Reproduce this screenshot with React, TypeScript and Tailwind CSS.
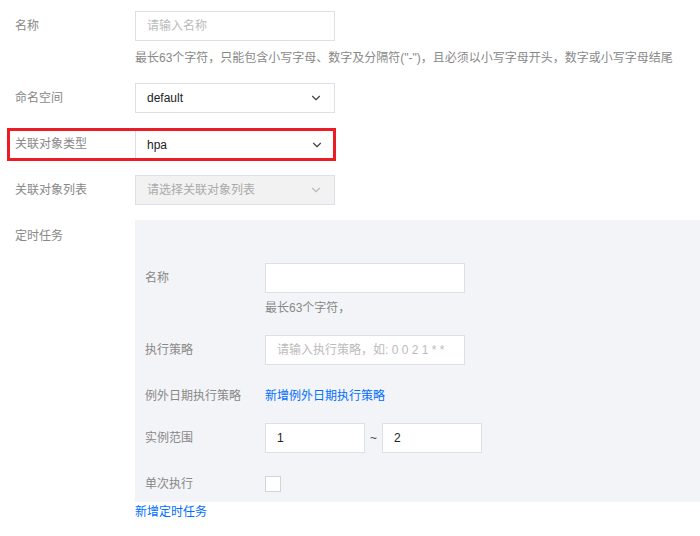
import { ChevronDown } from 'lucide-react';

const FONT = { fontFamily: '"Liberation Sans", "Noto Sans CJK SC", sans-serif' };

function Label({ children, width = 'w-[120px]' }: { children: React.ReactNode; width?: string }) {
  return <div className={`${width} shrink-0 text-[12px] leading-[30px] text-[#888]`}>{children}</div>;
}

function Select({ value, disabled }: { value: string; disabled?: boolean }) {
  return (
    <div
      className={`w-[200px] h-[30px] flex items-center justify-between pl-[11px] pr-[11px] border border-[#dcdfe6] text-[12px] ${
        disabled ? 'bg-[#f2f2f2] text-[#aaa]' : 'bg-white text-[#222]'
      }`}
    >
      <span>{value}</span>
      <ChevronDown className={`w-[14px] h-[14px] ${disabled ? 'text-[#bbb]' : 'text-[#444]'}`} strokeWidth={2} />
    </div>
  );
}

function Input({ placeholder, value, width = 'w-[200px]' }: { placeholder?: string; value?: string; width?: string }) {
  return (
    <div className={`${width} h-[30px] flex items-center px-[11px] bg-white border border-[#dcdfe6] text-[12px]`}>
      {value ? <span className="text-[#222]">{value}</span> : <span className="text-[#bbb]">{placeholder}</span>}
    </div>
  );
}

export default function App() {
  return (
    <div className="w-[700px] h-[536px] bg-white overflow-hidden pt-[11px]" style={FONT}>
      {/* 名称 */}
      <div className="flex pl-[15px]">
        <Label>名称</Label>
        <Input placeholder="请输入名称" />
      </div>
      <div className="ml-[135px] mt-[8px] text-[12px] leading-[18px] text-[#888]">
        最长63个字符，只能包含小写字母、数字及分隔符("-")，且必须以小写字母开头，数字或小写字母结尾
      </div>

      {/* 命名空间 */}
      <div className="flex pl-[15px] mt-[16px]">
        <Label>命名空间</Label>
        <Select value="default" />
      </div>

      {/* 关联对象类型 (highlighted) */}
      <div className="ml-[7px] mt-[15px] w-[329px] h-[33px] border-[3px] border-[#ec1c24] flex">
        <div className="w-[125px] pl-[5px] shrink-0 text-[12px] leading-[27px] text-[#888]">关联对象类型</div>
        <div className="w-[198px] h-full flex items-center justify-between pl-[11px] pr-[9px] border-l border-[#dcdfe6] text-[12px] text-[#222]">
          <span>hpa</span>
          <ChevronDown className="w-[14px] h-[14px] text-[#444]" strokeWidth={2} />
        </div>
      </div>

      {/* 关联对象列表 */}
      <div className="flex pl-[15px] mt-[14px]">
        <Label>关联对象列表</Label>
        <Select value="请选择关联对象列表" disabled />
      </div>

      {/* 定时任务 */}
      <div className="flex pl-[15px] mt-[15px]">
        <div className="w-[120px] shrink-0 pt-[7px] text-[12px] leading-[18px] text-[#888]">定时任务</div>
        <div className="flex-1">
          <div className="bg-[#f3f4f7] h-[282px] pl-[10px] pt-[43px]">
            <div className="flex">
              <Label>名称</Label>
              <Input />
            </div>
            <div className="ml-[120px] mt-[7px] text-[12px] leading-[16px] text-[#888]">最长63个字符，</div>
            <div className="flex mt-[19px]">
              <Label>执行策略</Label>
              <Input placeholder="请输入执行策略，如: 0 0 2 1 * *" />
            </div>
            <div className="flex mt-[16px]">
              <Label>例外日期执行策略</Label>
              <span className="text-[12px] leading-[30px] text-[#006eff]">新增例外日期执行策略</span>
            </div>
            <div className="flex mt-[12px] items-center">
              <Label>实例范围</Label>
              <Input value="1" width="w-[100px]" />
              <span className="w-[17px] text-center text-[12px] text-[#444]">~</span>
              <Input value="2" width="w-[100px]" />
            </div>
            <div className="flex mt-[16px] items-center">
              <Label>单次执行</Label>
              <div className="w-[16px] h-[16px] bg-white border border-[#cfd5de]" />
            </div>
          </div>
          <div className="text-[12px] leading-[20px] text-[#006eff]">新增定时任务</div>
        </div>
      </div>
    </div>
  );
}
